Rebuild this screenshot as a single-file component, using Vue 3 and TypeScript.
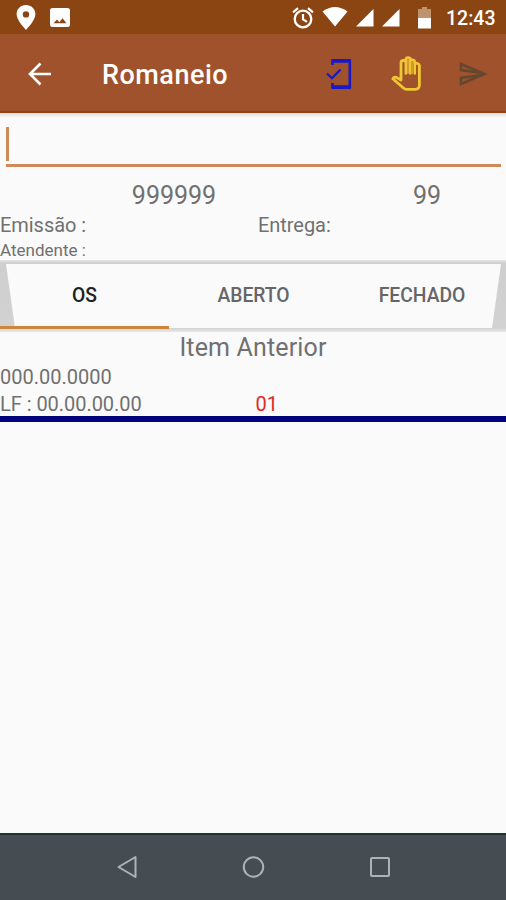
<script setup lang="ts">
import { ref } from 'vue'

const tabs = ['OS', 'ABERTO', 'FECHADO']
const active = ref(0)
const order = { number: '999999', count: '99' }
const item = { code: '000.00.0000', lf: '00.00.00.00', qty: '01' }
</script>

<template>
  <div class="screen">
    <header class="status">
      <svg class="pin" width="20" height="25" viewBox="0 0 20 25"><path fill="#fff" fill-rule="evenodd" d="M10 0C4.600 0 .6 4 .6 9.300C.6 15.500 10 25 10 25S19.400 15.500 19.400 9.300C19.400 4 15.400 0 10 0ZM10 6.200a3.200 3.200 0 1 1 0 6.400a3.200 3.200 0 0 1 0-6.400Z" /></svg>
      <svg class="photo" width="20" height="20" viewBox="0 0 20 20"><path fill="#fff" fill-rule="evenodd" d="M2.500 0h15Q20 0 20 2.500v14Q20 19 17.500 19h-15Q0 19 0 16.500v-14Q0 0 2.500 0ZM3.500 15.300h13l-4-5-3.200 4-2.300-2.700Z" /></svg>
      <div class="space"></div>
      <svg class="alarm" width="22" height="22" viewBox="0 0 22 22" fill="none" stroke="#fff"><circle cx="11" cy="12" r="8.300" stroke-width="2.300" /><path stroke-width="2.200" d="M1 5.300 6 1.200M21 5.300 16 1.200M11 7v5.300l4 2.600" /></svg>
      <svg class="wifi" width="26" height="20" viewBox="0 0 26 20"><path fill="#fff" d="M.5 4.500Q13-4.500 25.500 4.500L13 19.500Z" /></svg>
      <svg class="signal" width="18" height="18" viewBox="0 0 18 18"><path fill="#fff" d="M17.500 0v17.500H0Z" /></svg>
      <svg class="signal" width="18" height="18" viewBox="0 0 18 18"><path fill="#fff" d="M17.500 0v17.500H0Z" /></svg>
      <svg class="battery" width="13" height="22" viewBox="0 0 13 22"><path fill="#c0936f" d="M4 0h5v2h4v10H0V2h4Z" /><path fill="#fff" d="M0 11h13v10.500H0Z" /></svg>
      <span class="clock">12:43</span>
    </header>

    <nav class="appbar">
      <svg class="back" width="24" height="24" viewBox="0 0 24 24" fill="none" stroke="#fff" stroke-width="2.600"><path d="M23 12H2.500M12.500 1.500 2 12l10.500 10.500" /></svg>
      <h1>Romaneio</h1>
      <svg class="phone" width="26" height="32" viewBox="0 0 26 32" fill="none" stroke="#1818c4"><path stroke-width="2.600" stroke-linejoin="round" d="M6.500 7V2.300h17.300v27.400H6.500V25" /><path stroke-width="3.400" d="M6.500 3h17M6.500 29h17" /><path stroke-width="2.200" d="M1 15.500l5 4.800 8.500-8.800" /></svg>
      <svg class="hand" width="30" height="35" viewBox="0 0 30 35" fill="none" stroke="#f0c733" stroke-width="2.800" stroke-linejoin="round" stroke-linecap="round"><path d="M10 24V6.500q0-2 2.200-2t2.800.8V3.300q0-1.700 2.100-1.700t2.400 1.600v1.200q.8-.8 2.400-.5t1.900 1.800v2.200q1.200-.9 2.800-.4t1.800 2v19.500q0 4.300-4.300 4.300h-8.400q-1.800 0-3.600-1.600L1.800 22.800q.6-2 3.300-1.500L10 24" /><path stroke-width="2.500" d="M14.800 5v12.500M19.300 5v12.500M23.800 7v10.500" /><path stroke="#d69a32" stroke-width="2" d="M17 4v13M21.500 6v11" /></svg>
      <svg class="send" width="32" height="32" viewBox="0 0 24 24"><path fill="#65472f" d="M4.010 6.030l7.510 3.220-7.520-1 .01-2.220m7.500 8.720L4 17.970v-2.220l7.510-1M2.010 3L2 10l15 2-15 2 .01 7L23 12 2.010 3z" /></svg>
    </nav>

    <main>
      <div class="field"><i class="caret"></i></div>
      <div class="numbers"><span>{{ order.number }}</span><span>{{ order.count }}</span></div>
      <div class="dates"><span>Emissão :</span><span>Entrega:</span></div>
      <div class="attendant">Atendente :</div>

      <div class="tabs">
        <button v-for="(tab, i) in tabs" :key="tab" :class="{ active: i === active }" @click="active = i"><span>{{ tab }}</span></button>
      </div>

      <h2>Item Anterior</h2>
      <div class="code">{{ item.code }}</div>
      <div class="lf"><span>LF : {{ item.lf }}</span><span class="qty">{{ item.qty }}</span></div>
    </main>

    <footer>
      <svg width="24" height="24" viewBox="0 0 24 24"><path d="M20.500 2v20L3.500 12Z" /></svg>
      <svg width="24" height="24" viewBox="0 0 24 24"><circle cx="11.500" cy="12" r="9.700" /></svg>
      <svg width="24" height="24" viewBox="0 0 24 24"><rect x="3" y="3" width="18" height="18" rx="1" /></svg>
    </footer>
  </div>
</template>

<style>
body { margin: 0; }
</style>

<style scoped>
* { box-sizing: border-box; }
.screen { width: 506px; height: 900px; display: flex; flex-direction: column; overflow: hidden; background: #fafafa; color: #707070; font-family: Roboto, sans-serif; }
svg { display: block; flex: none; }
.status { height: 34px; flex: none; display: flex; align-items: flex-start; background: #8b4513; padding-left: 16px; }
.pin { margin-top: 5px; }
.photo { margin: 8px 0 0 14px; }
.space { flex: 1; }
.alarm { margin: 7px 8px 0 0; }
.wifi { margin: 7px 8px 0 0; }
.signal { margin: 9px 8px 0 0; }
.battery { margin: 7px 15px 0 10px; }
.clock { width: 60px; color: #fff; font-size: 19.500px; font-weight: 500; line-height: 37px; white-space: nowrap; }
.appbar { height: 79px; flex: none; display: flex; align-items: center; padding: 2px 17px 0 28px; background: #a0522d; border-bottom: 2px solid #8d4513; }
h1 { margin: 2px auto 0 50px; color: #fff; font-size: 27px; line-height: 32px; font-weight: 500; letter-spacing: .5px; }
.phone { margin-right: 39px; }
.hand { margin-right: 36px; }
main { flex: 1; background: linear-gradient(#dcdce0, #fafafa 5px); display: flex; flex-direction: column; }
.field { height: 54px; margin: 0 5px 0 6px; padding-top: 14px; border-bottom: 3px solid #cf8a57; }
.caret { display: block; width: 3px; height: 34px; background: #cf8a57; }
.numbers { display: grid; grid-template-columns: 348px 158px; text-align: center; font-size: 25px; line-height: 30px; padding-top: 14px; }
.dates { display: grid; grid-template-columns: 258px 1fr; font-size: 20px; line-height: 26px; padding-top: 1px; letter-spacing: -.05px; }
.attendant { font-size: 17px; line-height: 22px; height: 22px; padding-top: 1px; }
.tabs { height: 72px; flex: none; display: grid; grid-template-columns: 169px 169px 168px; position: relative; isolation: isolate; background: linear-gradient(#e7e7e7, #cecece 3px, #d2d2d2 68px, #e8e8e8); }
.tabs::before { content: ''; position: absolute; z-index: -1; inset: 4px 5px 4px 6px; background: #fafafa; clip-path: polygon(0 0, 100% 0, calc(100% - 9px) 100%, 9px 100%); }
button { height: 69px; border: 0; border-bottom: 3px solid transparent; padding: 6px 0 0; background: none; color: #666; font: 500 19.300px/30px Roboto, sans-serif; }
button.active { color: #202020; border-color: #cd853f; }
h2 { margin: 0; text-align: center; font-size: 25px; line-height: 32px; height: 30px; font-weight: 400; letter-spacing: .15px; }
.code { font-size: 20px; line-height: 26px; padding-top: 2px; }
.lf { display: grid; grid-template-columns: 255.500px 1fr; height: 32px; font-size: 20px; line-height: 28px; letter-spacing: -.04px; border-bottom: 6px solid #00007b; }
.qty { color: #e02828; }
footer { height: 67px; flex: none; border-top: 2px solid #1e3031; background: #454d52; display: flex; justify-content: space-between; padding: 20px 114px 0 115px; }
footer svg { fill: none; stroke: #aeb4b6; stroke-width: 2; stroke-linejoin: round; }
</style>
